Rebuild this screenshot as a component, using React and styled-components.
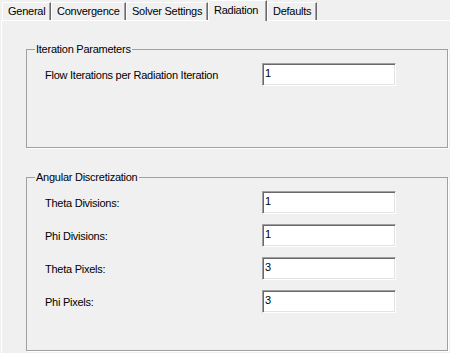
import React from "react";
import styled, { createGlobalStyle } from "styled-components";

const GlobalStyle = createGlobalStyle`
  html, body {
    margin: 0;
    padding: 0;
    background: #f0f0f0;
  }
  body {
    font-family: "Liberation Sans", Arial, sans-serif;
    font-size: 11px;
    letter-spacing: -0.25px;
    color: #000;
  }
`;

const tabs = [
  { label: "General", width: 49 },
  { label: "Convergence", width: 75 },
  { label: "Solver Settings", width: 82 },
  { label: "Radiation", width: 59, active: true },
  { label: "Defaults", width: 50 },
];

const iterationRows = [{ label: "Flow Iterations per Radiation Iteration", value: "1" }];

const angularRows = [
  { label: "Theta Divisions:", value: "1" },
  { label: "Phi Divisions:", value: "1" },
  { label: "Theta Pixels:", value: "3" },
  { label: "Phi Pixels:", value: "3" },
];

export default function App() {
  return (
    <>
      <GlobalStyle />
      <StyledWindow>
        <StyledTabStrip>
          {tabs.map((t) => (
            <StyledTab key={t.label} $width={t.width} $active={t.active}>
              {t.label}
            </StyledTab>
          ))}
        </StyledTabStrip>
        <StyledPanel>
          <StyledGroup $height={105}>
            <StyledLegend>Iteration Parameters</StyledLegend>
            <StyledFields $top={7} $gap={10}>
              {iterationRows.map((r) => (
                <React.Fragment key={r.label}>
                  <StyledLabel>{r.label}</StyledLabel>
                  <StyledInput defaultValue={r.value} />
                </React.Fragment>
              ))}
            </StyledFields>
          </StyledGroup>
          <StyledGroup $height={180}>
            <StyledLegend>Angular Discretization</StyledLegend>
            <StyledFields $top={7} $gap={10}>
              {angularRows.map((r) => (
                <React.Fragment key={r.label}>
                  <StyledLabel>{r.label}</StyledLabel>
                  <StyledInput defaultValue={r.value} />
                </React.Fragment>
              ))}
            </StyledFields>
          </StyledGroup>
        </StyledPanel>
      </StyledWindow>
    </>
  );
}

const StyledWindow = styled.div`
  width: 450px;
  height: 353px;
  overflow: hidden;
  display: flex;
  flex-direction: column;
`;

const StyledTabStrip = styled.div`
  display: flex;
  align-items: flex-end;
  height: 20px;
  padding-left: 2px;
  position: relative;
  z-index: 1;
`;

const StyledTab = styled.div`
  box-sizing: border-box;
  width: ${(p) => p.$width}px;
  height: ${(p) => (p.$active ? 21 : 18)}px;
  margin-bottom: ${(p) => (p.$active ? -1 : 0)}px;
  padding: 0 0 ${(p) => (p.$active ? 3 : 1)}px 5px;
  display: flex;
  align-items: center;
  white-space: nowrap;
  background: #f0f0f0;
  border-top: 1px solid #fff;
  border-left: 1px solid #fff;
  border-right: 1px solid #696969;
  box-shadow: inset -1px 0 0 #a0a0a0;
`;

const StyledPanel = styled.div`
  flex: 1;
  margin-left: 1px;
  padding: 22px 0 0 24px;
  border-top: 1px solid #fff;
  border-left: 1px solid #fff;
  display: flex;
  flex-direction: column;
  gap: 23px;
`;

const StyledGroup = styled.fieldset`
  box-sizing: border-box;
  margin: 0;
  width: 422px;
  height: ${(p) => p.$height}px;
  padding: 0 0 0 8px;
  border: 1px solid #a0a0a0;
  box-shadow: 1px 1px 0 #fff;
`;

const StyledLegend = styled.legend`
  padding: 0 1px;
  line-height: 13px;
`;

const StyledFields = styled.div`
  display: grid;
  grid-template-columns: 217px 134px;
  row-gap: ${(p) => p.$gap}px;
  padding: ${(p) => p.$top}px 0 0 10px;
  align-items: center;
`;

const StyledLabel = styled.div`
  white-space: nowrap;
`;

const StyledInput = styled.input`
  box-sizing: border-box;
  width: 134px;
  height: 23px;
  margin: 0;
  padding: 0 0 3px 2px;
  font: inherit;
  color: #000;
  background: #fff;
  outline: none;
  border-style: solid;
  border-width: 1px;
  border-color: #a0a0a0 #fff #fff #a0a0a0;
  box-shadow: inset 1px 1px 0 #696969, inset -1px -1px 0 #e3e3e3;
`;
